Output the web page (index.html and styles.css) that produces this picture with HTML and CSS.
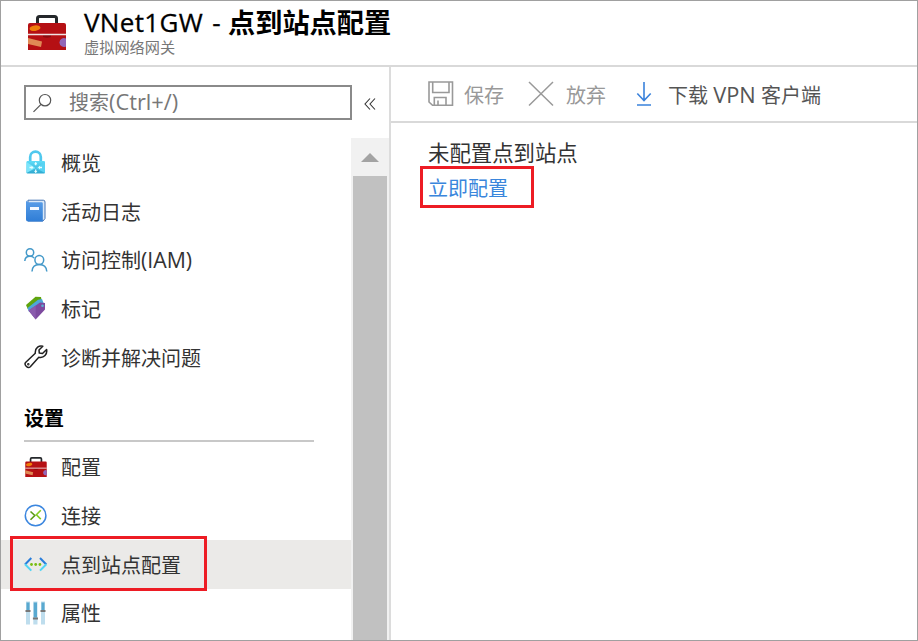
FILE: index.html
```html
<!DOCTYPE html>
<html lang="zh-CN">
<head>
<meta charset="utf-8">
<title>VNet1GW</title>
<link rel="stylesheet" href="styles.css">
</head>
<body>
<svg class="defs" width="0" height="0">
  <defs>
    <linearGradient id="lockBody" x1="0" y1="0" x2="0" y2="1"><stop offset="0" stop-color="#5fdcf8"/><stop offset="1" stop-color="#2fa9d0"/></linearGradient>
    <linearGradient id="book" x1="0" y1="0" x2="0" y2="1"><stop offset="0" stop-color="#5a9ee8"/><stop offset="1" stop-color="#2f7dd6"/></linearGradient>
    <symbol id="toolbox" viewBox="0 0 38 35">
      <path d="M9.5 9V3.5Q9.500 1.500 11.500 1.500H26.500Q28.500 1.500 28.500 3.500V9" fill="none" stroke="#25282b" stroke-width="3"/>
      <path d="M0 35V10Q0 8 2 8H36Q38 8 38 10V35Z" fill="#b51014"/>
      <ellipse cx="7" cy="13.200" rx="5.500" ry="2.800" transform="rotate(-8 7 13.200)" fill="#ef7d0a"/>
      <path d="M15 20H23V22Q19 23.500 15 22Z" fill="#8c0a0e"/>
      <path d="M0 23L14 26.500L13 32L0 29Z" fill="#e08a55"/>
      <path d="M38 23.500A4.500 4.500 0 1 0 38 31.500Z" fill="#9166b8"/>
      <path d="M0 19.500H38" stroke="#f0e4e4" stroke-width="1.500"/>
    </symbol>
  </defs>
</svg>
<div class="app">
  <header class="header">
    <svg class="header-icon"><use href="#toolbox"/></svg>
    <div class="titles">
      <h1 class="title"><span class="resource">VNet1GW -</span><span class="page">点到站点配置</span></h1>
      <div class="subtitle">虚拟网络网关</div>
    </div>
  </header>
  <div class="body">
    <aside class="sidebar">
      <div class="search-row">
        <div class="search">
          <svg width="20" height="20" viewBox="0 0 20 20" fill="none" stroke="#555" stroke-width="1.200"><circle cx="12" cy="7.200" r="5.700"/><path d="M8 11.300L.5 18.800"/></svg>
          <span>搜索<b class="latin">(Ctrl+/)</b></span>
        </div>
        <svg class="collapse" width="12" height="12" viewBox="0 0 12 12" fill="none" stroke="#333" stroke-width="1.100"><path d="M6 .5L1 6L6 11.500M11 .5L6 6L11 11.500"/></svg>
      </div>
      <div class="menu-row">
        <nav class="menu">
          <a class="item">
            <svg viewBox="0 0 24 24"><path d="M6.200 12V7a5.300 5.300 0 0 1 10.600 0V12" fill="none" stroke="#4fc8ee" stroke-width="2.700"/><rect x="2.500" y="11" width="18.500" height="12.500" rx="1" fill="url(#lockBody)"/><path d="M2.500 12L11.700 18L2.500 23Z" fill="#7be5fb"/><path d="M21 12L11.700 18L21 23Z" fill="#58d3f3"/><path d="M11.700 12.500V15.300M11.700 19.500V22.500M5.500 17.500H8.500M15 17.500H18" stroke="#eaffff" stroke-width="1.300"/><path d="M10 14.300L11.700 12L13.400 14.300ZM10 21L11.700 23L13.400 21ZM7.500 15.700L9.500 17.500L7.500 19.300ZM16 15.700L14 17.500L16 19.300Z" fill="#eaffff"/></svg>
            <span>概览</span></a>
          <a class="item">
            <svg viewBox="0 0 24 24"><path d="M4 1.200H19.300Q21 1.200 21 3V19.500L19 22H4Z" fill="#d9e8f8" stroke="#4674b4" stroke-width="1"/><path d="M2 3Q2 1.500 3.500 1.500Q2.800 3.300 4.500 3.300H17.500Q18.800 3.300 18.800 4.500V22.500H4Q2 22.500 2 20.500Z" fill="url(#book)"/><rect x="6" y="8" width="9" height="3" fill="#f4f9ff"/></svg>
            <span>活动日志</span></a>
          <a class="item">
            <svg viewBox="0 0 24 24" fill="none" stroke="#4499c9" stroke-width="1.500"><circle cx="6" cy="4.500" r="3.700"/><path d="M.8 13C1 9.700 3 8.300 6 8.300Q8.500 8.300 10.200 10"/><circle cx="15.300" cy="12" r="4.400"/><path d="M8 23.500C8.200 19 11 16.500 15.300 16.500S22.500 19 22.800 23.500"/></svg>
            <span>访问控制<b class="latin">(IAM)</b></span></a>
          <a class="item">
            <svg viewBox="0 0 24 24"><path d="M2 9L11.500 .8L17 1L18 6L4 13.500Z" fill="#5fa40d"/><path d="M3.500 12L14 3.800L18 3L20 8L5 16Z" fill="#4da8da"/><path d="M4.500 14.500L16 6.500L21 7V13.500L11.700 23.500Z" fill="#7d4a9f"/><path d="M4.500 14.500L11.700 9.500V23.500Z" fill="#8a5bad"/><circle cx="18.500" cy="9.800" r="1.300" fill="#58b5d7"/></svg>
            <span>标记</span></a>
          <a class="item">
            <svg viewBox="0 0 24 24" fill="none" stroke="#202020" stroke-width="1.500" stroke-linejoin="round"><path d="M18.800 1.300C15.500 .2 10.800 2.500 11.300 8.200L1.800 17.200C-.5 19.500 3.700 24.200 6.300 21.800L14.800 12.300C20 13.500 23.500 9.200 22.600 4.500L18.500 8.500L15.300 8.100L15 5Z"/><circle cx="4.300" cy="19.300" r=".5"/></svg>
            <span>诊断并解决问题</span></a>
          <h2 class="section">设置</h2>
          <a class="item toolbox-item"><svg viewBox="0 0 38 35"><use href="#toolbox"/></svg><span>配置</span></a>
          <a class="item">
            <svg viewBox="0 0 24 24" fill="none"><circle cx="11.600" cy="12.500" r="10.300" fill="#fff" stroke="#3b86df" stroke-width="1.500"/><path d="M6.500 8.500L10.800 12.500L6.500 16.700" stroke="#5c9c16" stroke-width="1.600"/><path d="M16.800 7.300L12.400 11.700L16.800 16.100" stroke="#83cc20" stroke-width="1.600"/></svg>
            <span>连接</span></a>
          <a class="item selected">
            <svg viewBox="0 0 24 24" fill="none" stroke-width="2"><path d="M7.300 6L1 12.500" stroke="#287ddb"/><path d="M1 12.200L7.300 18.600" stroke="#50d5f5"/><path d="M16 6L22.300 12.500" stroke="#287ddb"/><path d="M22.300 12.200L16 18.600" stroke="#50d5f5"/><g fill="#79bd12"><circle cx="7.500" cy="12.500" r="1.400"/><circle cx="11.700" cy="12.500" r="1.400"/><circle cx="15.900" cy="12.500" r="1.400"/></g></svg>
            <span>点到站点配置</span>
            <i class="callout callout-menu"></i></a>
          <a class="item">
            <svg viewBox="0 0 24 24"><g fill="#bedded"><rect x="2" y=".5" width="4" height="23"/><rect x="9.300" y=".5" width="4.200" height="23"/><rect x="17" y=".5" width="4" height="23"/></g><g fill="#59a9d0"><rect x="2.500" y="1.500" width="3" height="7.500"/><rect x="9.700" y="1.500" width="3.300" height="15"/><rect x="17.500" y="1.500" width="3" height="7.500"/></g><path d="M1.500 10H6.500M8.900 17.500H14M16.500 10H21.500" stroke="#777" stroke-width="1.800"/></svg>
            <span>属性</span></a>
        </nav>
        <div class="scrollbar"><div class="up"><i></i></div><div class="thumb"></div></div>
      </div>
    </aside>
    <main class="main">
      <div class="toolbar">
        <div class="command save"><svg width="26" height="26" viewBox="0 0 26 26" fill="none" stroke="#999" stroke-width="1.600"><path d="M1 1H24.500V24.300H4.500L1 21Z"/><path d="M4.700 1V11.500H21V1M6.300 24V16.500H18V24M10 24V19.500"/></svg><span>保存</span></div>
        <div class="command discard"><svg width="26" height="26" viewBox="0 0 26 26" fill="none" stroke="#999" stroke-width="1.500"><path d="M1 1L25 24.500M25 1L1 24.500"/></svg><span>放弃</span></div>
        <div class="command download"><svg width="16" height="26" viewBox="0 0 16 26" fill="none" stroke="#3a82db" stroke-width="1.600"><path d="M8 1V19.500M1.300 12.500L8 19.500L14.700 12.500M1 24H15"/></svg><span>下载 <b class="latin">VPN</b> 客户端</span></div>
      </div>
      <div class="content">
        <p class="status">未配置点到站点</p>
        <a class="configure">立即配置</a>
      </div>
    </main>
  </div>
</div>
</body>
</html>
```
FILE: styles.css
```css
* { box-sizing: border-box; }
body {
  margin: 0;
  font-family: "Open Sans", "Noto Sans CJK SC", sans-serif;
  font-size: 20px;
  color: #333;
  background: #fff;
}
h1, h2, p { margin: 0; }
.defs { position: absolute; }
.latin { font-weight: 400; font-size: 21.300px; line-height: 1; }
.app {
  width: 918px;
  height: 641px;
  border: 1px solid #a0a0a0;
  display: flex;
  flex-direction: column;
  overflow: hidden;
}
.header {
  height: 66px;
  flex: none;
  display: flex;
  padding-left: 27px;
  border-bottom: 2px solid #d9d9d9;
}
.header-icon { width: 38px; height: 35px; margin-top: 14px; }
.titles { margin-left: 18px; }
.title {
  display: flex;
  height: 36px;
  padding-top: 7px;
  line-height: 29px;
  color: #000;
  white-space: nowrap;
}
.resource { width: 144px; font-size: 26px; font-weight: 400; letter-spacing: .35px; word-spacing: 2px; -webkit-text-stroke: .3px #000; }
.page { font-size: 27.200px; font-weight: 700; }
.subtitle { font-size: 15.200px; line-height: 21px; color: #777; }
.body { display: flex; flex: 1; min-height: 0; }
.sidebar {
  width: 390px;
  flex: none;
  display: flex;
  flex-direction: column;
  border-right: 2px solid #dcdcdc;
}
.search-row { display: flex; align-items: center; height: 71px; padding: 0 0 0 23px; flex: none; }
.search {
  width: 328px;
  height: 35px;
  border: 2px solid #8a8a8a;
  display: flex;
  align-items: center;
  padding-left: 7px;
  color: #777;
  line-height: 30px;
}
.search span { margin-left: 16px; font-size: 20px; }
.search .latin { font-size: 21.800px; }
.collapse { margin: 3px 0 0 12px; }
.menu-row { display: flex; flex: 1; min-height: 0; }
.menu { width: 350px; overflow: hidden; }
.item {
  display: flex;
  align-items: center;
  height: 48.700px;
  padding-left: 23px;
  position: relative;
  white-space: nowrap;
}
.item svg { width: 24px; height: 24px; flex: none; }
.item span { margin-left: 13px; padding-top: 3px; line-height: 28px; }
.item.toolbox-item svg { width: 22px; height: 20px; margin: 0 1px; }
.selected { background: #ebeae8; }
.section {
  height: 61px;
  width: 290px;
  margin-left: 23px;
  font-size: 20px;
  line-height: 75px;
  color: #000;
  background: linear-gradient(#c8c8c8, #c8c8c8) 0 59px / 100% 2px no-repeat;
}
.callout { position: absolute; border: 3px solid #ed1c24; }
.callout-menu { left: 9px; top: -4px; width: 197px; height: 55px; }
.scrollbar { width: 38px; background: #f1f1f1; display: flex; flex-direction: column; }
.up { height: 38px; display: flex; align-items: center; justify-content: center; }
.up i {
  border: 9px solid transparent;
  border-top: 0;
  border-bottom: 9px solid #a3a3a3;
}
.thumb { flex: 1; margin: 0 2px; background: #c1c1c1; }
.main { flex: 1; }
.toolbar {
  height: 56px;
  padding: 0 0 0 37px;
  display: flex;
  align-items: center;
  border-bottom: 2px solid #d9d9d9;
}
.command { display: flex; align-items: center; white-space: nowrap; }
.command span { line-height: 30px; padding-top: 3px; }
.save, .discard { color: #999; }
.save span { margin-left: 10px; }
.discard { margin-left: 24px; }
.discard span { margin-left: 12px; }
.download { margin-left: 30px; color: #555; }
.download span { margin-left: 16px; }
.download .latin { font-size: 21.800px; }
.content { padding: 15px 0 0 37px; }
.status { font-size: 21.400px; line-height: 30px; }
.configure {
  display: block;
  width: 114px;
  height: 42px;
  margin: -2px 0 0 -8px;
  padding-left: 5px;
  border: 3px solid #ed1c24;
  line-height: 40px;
  color: #3a86dc;
}
```
